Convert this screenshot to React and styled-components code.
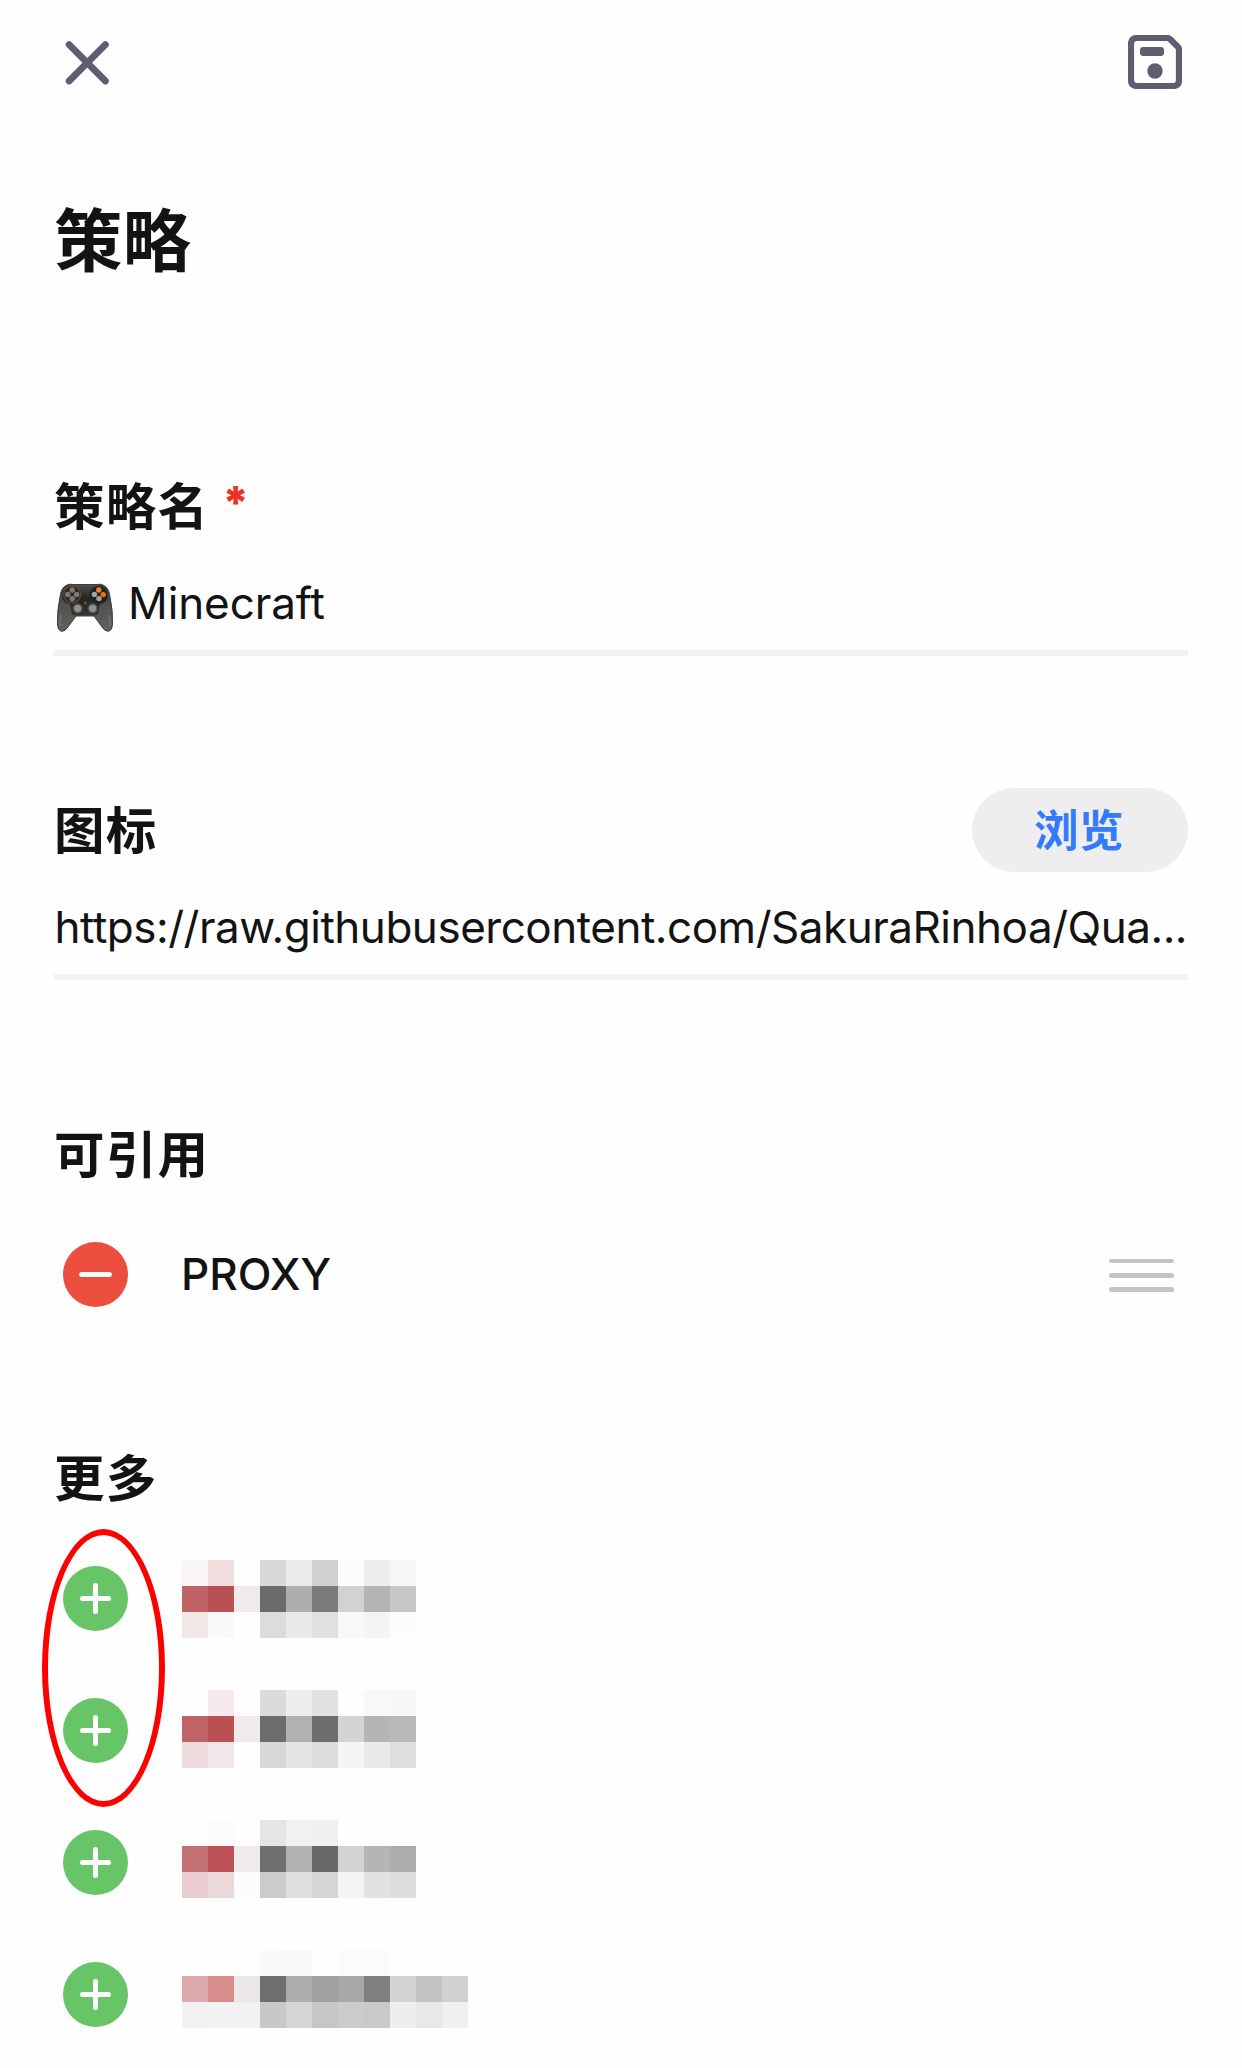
import React from "react";
import styled, { createGlobalStyle } from "styled-components";

const GlobalStyle = createGlobalStyle`
  *, *::before, *::after { box-sizing: border-box; }
  html, body { margin: 0; background: #fefefe; }
  button { border: 0; padding: 0; background: none; font: inherit; color: inherit; display: block; }
  svg { display: block; }
`;

const Screen = styled.main`
  width: 1242px;
  height: 2068px;
  overflow: hidden;
  padding: 0 54px;
  display: flex;
  flex-direction: column;
  background: #fefefe;
  color: #131313;
  font-family: Inter, "Noto Sans CJK SC", sans-serif;
`;

const TopBar = styled.header`
  flex: none;
  height: 124px;
  display: flex;
  align-items: center;
  justify-content: space-between;
  padding: 0 6px;
  color: #5e5e73;
`;

const Title = styled.h1`
  flex: none;
  margin: 0;
  height: 340px;
  padding-top: 63px;
  font: 700 68.5px/100px "Noto Sans CJK SC", sans-serif;
`;

const Section = styled.section`
  flex: none;
  position: relative;
  height: ${(p) => p.$height || 324}px;
`;

const SectionHead = styled.div`
  height: 84px;
  display: flex;
  align-items: center;
  justify-content: space-between;
`;

const Label = styled.h2`
  margin: 0;
  padding-bottom: 6px;
  display: flex;
  gap: 13px;
  font: 700 50.5px/78px "Noto Sans CJK SC", sans-serif;
  letter-spacing: 1.2px;
`;

const Required = styled.span`
  color: #eb3323;
  font-family: Inter, sans-serif;
  font-size: 45px;
  font-weight: 900;
`;

const BrowseButton = styled.button`
  width: 216px;
  height: 84px;
  padding: 0 2px 4px 0;
  border-radius: 42px;
  background: #eeeeee;
  color: #347bfb;
  font: 700 44.5px/80px "Noto Sans CJK SC", sans-serif;
  letter-spacing: 0.4px;
  text-align: center;
`;

const Field = styled.div`
  height: 108px;
  border-bottom: 6px solid #f2f2f2;
  display: flex;
  align-items: center;
  gap: 15px;
  padding: 7px 0 0 ${(p) => p.$inset || 0}px;

  svg { margin-top: 9px; }
`;

const FieldText = styled.span`
  font-size: 44px;
  line-height: 60px;
  letter-spacing: ${(p) => p.$tracking || 0}px;
  white-space: nowrap;
`;

const List = styled.ul`
  margin: 0;
  padding: 12.5px 0 0;
  list-style: none;
`;

const Item = styled.li`
  height: 132px;
  display: flex;
  align-items: flex-start;
  padding-left: 9px;
`;

const RoundButton = styled.button`
  flex: none;
  width: 65px;
  height: 65px;
  margin: 33.5px 54px 0 0;
  border-radius: 50%;
  background: ${(p) => (p.$remove ? "#eb4e3d" : "#67c567")};
`;

const ItemName = styled.span`
  flex: 1;
  margin-left: -1px;
  font-size: 44px;
  font-weight: 500;
  line-height: 131px;
`;

const DragHandle = styled.span`
  margin: 50px 14px 0 0;
  width: 65px;
  display: flex;
  flex-direction: column;
  gap: 9.6px;
`;

const DragLine = styled.i`
  height: 4.8px;
  border-radius: 3px;
  background: #c4c4c6;
`;

const Mosaic = styled.div`
  display: grid;
  grid-template-columns: repeat(${(p) => p.$columns}, 26px);
  grid-auto-rows: 26px;
  margin-top: ${(p) => p.$top}px;
`;

const Tile = styled.i`
  background: ${(p) => p.$color};
`;

const Ring = styled.div`
  position: absolute;
  left: -12px;
  top: 93px;
  width: 123px;
  height: 278px;
  border: 6px solid #ff0000;
  border-radius: 50%;
  pointer-events: none;
`;

const tiles = [
  [
    "faf6f7 f1dddd fefefe d8d8d8 eaeaea d1d1d1 fcfcfc eeeeee f6f6f6",
    "bf6165 b95054 f0eaea 6b6b6b aeaeae 7b7b7b d2d2d2 b4b4b4 c7c7c7",
    "f2e8e7 faf8f9 fefefe dcdcdc e9e9e9 e0e0e0 f8f8f8 f4f4f4 fcfcfc",
  ],
  [
    "fefefe f7eaec fefefe dbdbdb ededed e1e1e1 fefefe f8f8f8 f7f7f7",
    "bf6368 b95054 f0eaea 6c6c6c b1b1b1 6e6e6e d4d4d4 b5b5b5 b8b8b8",
    "eedbdd f1e7e9 fefdfe d8d8d8 e4e4e4 dcdcdc f5f5f5 e9e9e9 dfdfdf",
  ],
  [
    "fefefe fcfafb fefefe e5e5e5 f1f1f1 f0f0f0 fefefe fefefe fefefe",
    "c37074 bc5257 f0eaea 6f6f6f b2b2b2 686868 d3d3d3 b5b5b5 adadad",
    "e9cdd0 ebd8da fdfbfc cbcbcb dedede d5d5d5 f4f4f4 e2e2e2 dddddd",
  ],
  [
    "fefefe fefefe fefefe fafafa f8f8f8 fefefe fbfbfb fbfbfb fefefe fefefe fefefe",
    "dea9ac d88c8b ebe7e9 6f6f6f acacac a0a0a0 a8a8a8 7f7f7f d4d4d4 c3c3c3 d1d1d1",
    "f1f1f1 f2f2f2 f2f2f2 c8c8c8 d5d5d5 c6c6c6 cccccc c9c9c9 eeeeee e8e8e8 f0f0f0",
  ],
].map((rows) => rows.map((row) => row.split(" ")));

const CloseIcon = () => (
  <svg width="55" height="55" viewBox="0 0 55 55" fill="none" stroke="currentColor" strokeWidth="6.8" strokeLinecap="round">
    <path d="M9.1 9.7 45.4 46M45.4 9.7 9.1 46" />
  </svg>
);

const SaveIcon = () => (
  <svg width="54" height="54" viewBox="0 0 54 54">
    <path
      d="M9 3H39.5Q41 3 42.2 4.2L49.8 11.8Q51 13 51 14.5V45Q51 51 45 51H9Q3 51 3 45V9Q3 3 9 3Z"
      fill="none"
      stroke="currentColor"
      strokeWidth="6.2"
    />
    <rect x="12" y="12" width="24" height="9" rx="3" fill="currentColor" />
    <circle cx="27" cy="36" r="7.7" fill="currentColor" />
  </svg>
);

const SignIcon = ({ plus }) => (
  <svg width="65" height="65" viewBox="0 0 65 65" fill="none" stroke="#fff" strokeWidth="5" strokeLinecap="round">
    <path d={plus ? "M19.5 32.5H45.5M32.5 19.5V45.5" : "M18.7 32.5H46.3"} />
  </svg>
);

const GamepadIcon = () => (
  <svg width="56" height="49" viewBox="0 0 56 49" role="img" aria-label="🎮">
    <defs>
      <linearGradient id="shell" x1="0" y1="0" x2="0" y2="1">
        <stop offset="0" stopColor="#38403a" />
        <stop offset="0.45" stopColor="#4f524e" />
        <stop offset="1" stopColor="#62625e" />
      </linearGradient>
      <linearGradient id="bridge" x1="0" y1="0" x2="0" y2="1">
        <stop offset="0" stopColor="#4a504b" />
        <stop offset="0.45" stopColor="#242625" />
        <stop offset="1" stopColor="#333533" />
      </linearGradient>
    </defs>
    <path
      d="M9 2.5Q12 .5 17 1.5H39Q44 .5 47 2.5Q52 5 53 14Q56 28 55.5 40Q55.5 48 51 48.3Q48 48.5 45 44L37 33H19L11 44Q8 48.5 5 48.3Q.5 48 .5 40Q0 28 3 14Q4 5 9 2.5Z"
      fill="url(#shell)"
      stroke="#30322f"
      strokeWidth=".9"
    />
    <path d="M15 2H41Q50 3 51 12Q51 20 43 21L41 31Q39 33 36 32H20Q17 33 15 31L13 21Q5 20 5 12Q6 3 15 2Z" fill="url(#bridge)" />
    <circle cx="15.2" cy="11.4" r="8.5" fill="#292c2a" stroke="#794325" strokeWidth="1.2" />
    <g fill="#777b78">
      <circle cx="15.2" cy="7" r="2.7" />
      <circle cx="10.8" cy="11.4" r="2.7" />
      <circle cx="19.6" cy="11.4" r="2.7" />
      <circle cx="15.2" cy="15.8" r="2.7" />
    </g>
    <circle cx="41.6" cy="11.4" r="8.7" fill="#202321" />
    <circle cx="41.8" cy="7" r="2.7" fill="#f27b32" />
    <circle cx="46.2" cy="11.6" r="2.7" fill="#f36c18" />
    <circle cx="37.4" cy="11.4" r="2.7" fill="#a4a7a5" />
    <circle cx="42" cy="15.6" r="2.7" fill="#a4a7a5" />
    <circle cx="28.5" cy="19.7" r="1.5" fill="#8a4a22" />
    <circle cx="20.7" cy="25.5" r="4.2" fill="#8f9492" stroke="#555a57" strokeWidth="1.5" />
    <circle cx="35.7" cy="25.5" r="4.2" fill="#8f9492" stroke="#555a57" strokeWidth="1.5" />
    <path d="M4 32Q2.5 37 3.2 43M52 32Q53.5 37 52.8 43" fill="none" stroke="#74746f" strokeWidth="1.5" />
  </svg>
);

export default function App() {
  return (
    <Screen>
      <GlobalStyle />
      <TopBar>
        <button aria-label="关闭"><CloseIcon /></button>
        <button aria-label="保存"><SaveIcon /></button>
      </TopBar>
      <Title>策略</Title>

      <Section>
        <SectionHead>
          <Label>策略名<Required>*</Required></Label>
        </SectionHead>
        <Field $inset={3}>
          <GamepadIcon />
          <FieldText $tracking={-0.1}>Minecraft</FieldText>
        </Field>
      </Section>

      <Section>
        <SectionHead>
          <Label>图标</Label>
          <BrowseButton>浏览</BrowseButton>
        </SectionHead>
        <Field $inset={0.5}>
          <FieldText $tracking={-0.48}>https://raw.githubusercontent.com/SakuraRinhoa/Qua...</FieldText>
        </Field>
      </Section>

      <Section>
        <SectionHead>
          <Label>可引用</Label>
        </SectionHead>
        <List>
          <Item>
            <RoundButton $remove aria-label="移除"><SignIcon /></RoundButton>
            <ItemName>PROXY</ItemName>
            <DragHandle><DragLine /><DragLine /><DragLine /></DragHandle>
          </Item>
        </List>
      </Section>

      <Section $height={632}>
        <SectionHead>
          <Label>更多</Label>
        </SectionHead>
        <List>
          {tiles.map((rows, i) => (
            <Item key={i}>
              <RoundButton aria-label="添加"><SignIcon plus /></RoundButton>
              <Mosaic $columns={rows[0].length} $top={27.5 - 2 * i}>
                {rows.flat().map((color, n) => <Tile key={n} $color={`#${color}`} />)}
              </Mosaic>
            </Item>
          ))}
        </List>
        <Ring />
      </Section>
    </Screen>
  );
}
